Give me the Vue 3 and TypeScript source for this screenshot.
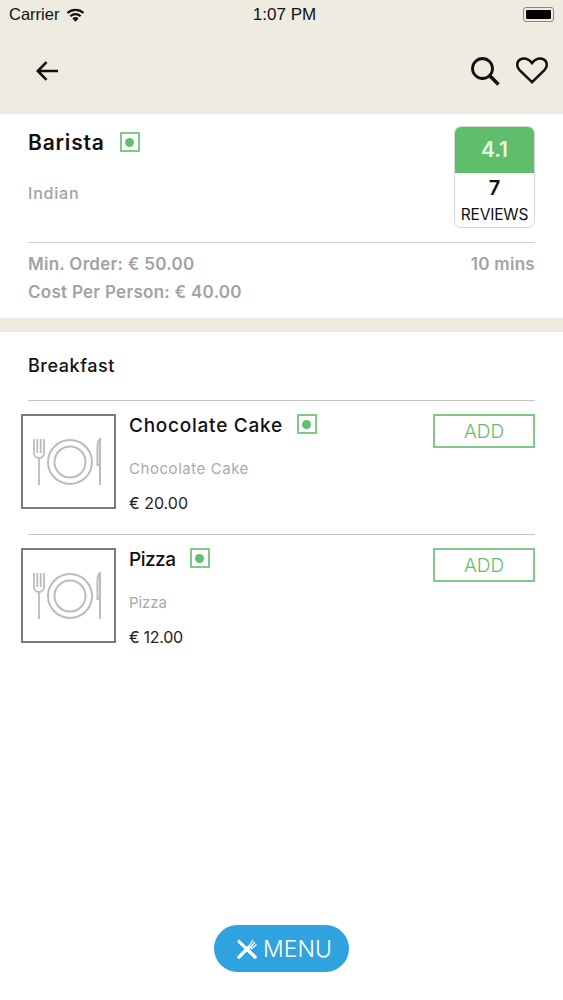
<script setup lang="ts">
interface Dish { name: string; price: string; short: boolean }
const dishes: Dish[] = [
  { name: 'Chocolate Cake', price: '€ 20.00', short: false },
  { name: 'Pizza', price: '€ 12.00', short: true },
]
</script>

<template>
  <div class="page">
    <header class="top">
      <div class="status">
        <div class="status-left">
          <span>Carrier</span>
          <svg width="19" height="14" viewBox="0 0 19 14">
            <path d="M9.500 13.800 6.400 10.400a4.400 4.400 0 0 1 6.200 0Z" fill="#111" />
            <path d="M4.400 8.200a7.400 7.400 0 0 1 10.200 0" fill="none" stroke="#111" stroke-width="2.200" />
            <path d="M1.500 5a11.700 11.700 0 0 1 16 0" fill="none" stroke="#111" stroke-width="2.200" />
          </svg>
        </div>
        <span class="clock">1:07 PM</span>
        <div class="battery"><div class="battery-fill"></div></div>
      </div>
      <nav class="nav">
        <svg class="back" width="24" height="20" viewBox="0 0 24 20">
          <path d="M22 10H2.500M10.500 1.200 1.800 10l8.700 8.800" fill="none" stroke="#111" stroke-width="2.600" />
        </svg>
        <div class="nav-right">
          <svg width="29" height="29" viewBox="0 0 29 29">
            <circle cx="11.500" cy="11.500" r="10" fill="none" stroke="#111" stroke-width="2.800" />
            <path d="M18.500 18.500 27.500 27.500" stroke="#111" stroke-width="3.600" fill="none" />
          </svg>
          <svg width="32" height="27" viewBox="0 0 32 27">
            <path d="M16 25.200 3.600 13.200C.2 9.500.6 4.800 4 2.600 7.600.4 12.600 1.200 16 6 19.400 1.200 24.400.4 28 2.600 31.400 4.800 31.800 9.500 28.400 13.200Z" fill="none" stroke="#111" stroke-width="2.500" />
          </svg>
        </div>
      </nav>
    </header>

    <section class="info">
      <div class="info-top">
        <div class="info-main">
          <div class="title-row">
            <h1 class="title">Barista</h1>
            <span class="veg"><i></i></span>
          </div>
          <p class="cuisine">Indian</p>
        </div>
        <div class="rating">
          <div class="rating-score">4.1</div>
          <div class="rating-count">7</div>
          <div class="rating-label">REVIEWS</div>
        </div>
      </div>
      <div class="info-meta">
        <div class="meta-row"><span>Min. Order: € 50.00</span><span>10 mins</span></div>
        <div class="meta-row"><span>Cost Per Person: € 40.00</span></div>
      </div>
    </section>

    <section class="menu-list">
      <h2 class="section-title">Breakfast</h2>
      <article v-for="dish in dishes" :key="dish.name" class="dish">
        <div class="thumb">
          <svg width="71" height="50" viewBox="0 0 71 50" fill="none" stroke="#bdbbbb">
            <path d="M1 2v14a5 5 0 0 0 10 0V2M4.300 2v14M7.700 2v14M6 21v27" stroke-width="1.800" />
            <circle cx="37" cy="25" r="22" stroke-width="2" />
            <circle cx="37" cy="25" r="15.500" stroke-width="2" />
            <path d="M67 48V28h-2.500V10c0-4 1-7 2.500-8v26" stroke-width="2" />
          </svg>
        </div>
        <div class="dish-body">
          <div class="dish-name-row">
            <h3 class="dish-name" :class="{ short: dish.short }">{{ dish.name }}</h3>
            <span class="veg"><i></i></span>
          </div>
          <p class="dish-desc" :class="{ short: dish.short }">{{ dish.name }}</p>
          <p class="dish-price" :class="{ short: dish.short }">{{ dish.price }}</p>
        </div>
        <button class="add" type="button">ADD</button>
      </article>
    </section>

    <button class="menu-btn" type="button">
      <svg width="20" height="20" viewBox="0 0 20 20" fill="#fff" stroke="#fff">
        <path d="M2 .5 19.300 16.700a1.700 1.700 0 0 1-2.500 2.500L1 3.800C.2 2.600.8 1 2 .5Z" stroke="none" />
        <path d="M1.900 18.100 11.800 8.200" stroke-width="3.400" stroke-linecap="round" />
        <path d="M11.500 8 16 1M12.800 9 18 3M13.800 10.300 19.500 5.500M11.800 8.200c1.500-.5 2-.3 2.800 1" stroke-width="1.300" fill="none" />
      </svg>
      <span>MENU</span>
    </button>
  </div>
</template>

<style>
html, body { margin: 0; background: #fff; }
</style>

<style scoped>
.page {
  position: relative;
  width: 563px;
  height: 1000px;
  overflow: hidden;
  background: #fff;
  font-family: Inter, "Liberation Sans", sans-serif;
  color: #111;
}
.top { height: 114px; background: #eeebe0; }
.status {
  height: 29px;
  padding: 0 9px;
  display: grid;
  grid-template-columns: 1fr auto 1fr;
  align-items: center;
  font-family: "Liberation Sans", sans-serif;
  font-size: 16.500px;
}
.status-left { display: flex; align-items: center; gap: 7px; }
.clock { font-size: 17px; margin-left: 6px; }
.battery {
  justify-self: end;
  width: 31px;
  height: 15px;
  box-sizing: border-box;
  border: 1px solid #888;
  border-radius: 3px;
  padding: 2px;
}
.battery-fill { height: 100%; background: #000; border-radius: 1px; }
.nav {
  display: flex;
  justify-content: space-between;
  align-items: flex-start;
  padding: 28px 15px 0 36px;
}
.back { margin-top: 4px; }
.nav-right { display: flex; align-items: flex-start; gap: 16px; }
.info { height: 192px; padding: 12px 28px 0; border-bottom: 14px solid #eeebe0; }
.info-top {
  display: flex;
  justify-content: space-between;
  align-items: flex-start;
  height: 116px;
  border-bottom: 1px solid #cfcfcf;
}
.title-row { display: flex; align-items: center; gap: 15px; height: 32px; }
.title { margin: 0; font-size: 21px; font-weight: 600; letter-spacing: .8px; }
.veg {
  width: 20px;
  height: 20px;
  box-sizing: border-box;
  border: 2px solid #80c988;
  display: flex;
  align-items: center;
  justify-content: center;
}
.veg i { width: 9px; height: 9px; border-radius: 50%; background: #62bd6c; display: block; }
.cuisine { margin: 25px 0 0; font-size: 16px; font-weight: 500; letter-spacing: .8px; color: #a2a2a6; }
.rating {
  width: 81px;
  height: 102px;
  box-sizing: border-box;
  border: 1px solid #d6d6d6;
  border-radius: 7px;
  overflow: hidden;
  text-align: center;
}
.rating-score {
  height: 47px;
  margin: -1px -1px 0;
  background: #5fbd6b;
  color: #e6f6e6;
  font-size: 21px;
  font-weight: 600;
  line-height: 47px;
}
.rating-count { font-size: 20px; font-weight: 600; line-height: 28px; margin-top: 1px; }
.rating-label { font-size: 15.500px; line-height: 26px; letter-spacing: -.2px; }
.info-meta { padding-top: 8px; font-size: 17px; font-weight: 600; letter-spacing: .28px; color: #a2a2a6; }
.meta-row { display: flex; justify-content: space-between; line-height: 27.500px; }
.menu-list { padding-top: 18px; }
.section-title { margin: 0 28px; height: 50px; font-size: 18px; font-weight: 500; letter-spacing: .55px; line-height: 32px; border-bottom: 1px solid #c4c4c4; }
.dish {
  margin-left: 21px;
  margin-right: 28px;
  padding-top: 13px;
  display: flex;
  align-items: flex-start;
  height: 120px;
}
.dish + .dish { border-top: 1px solid #c4c4c4; margin-left: 28px; }
.dish + .dish .thumb { margin-left: -7px; }
.thumb {
  width: 95px;
  height: 95px;
  box-sizing: border-box;
  border: 2px solid #7a7a7a;
  flex: none;
  display: flex;
  align-items: center;
  justify-content: center;
}
.dish-body { flex: 1; padding-left: 13px; }
.dish-name-row { display: flex; align-items: flex-start; gap: 14px; height: 24px; }
.dish-name { margin: 0; font-size: 19px; font-weight: 500; letter-spacing: .75px; line-height: 23px; }
.dish-name.short { letter-spacing: -.5px; }
.dish-desc { margin: 21px 0 0; font-size: 15px; letter-spacing: .55px; line-height: 20px; color: #a9a9ad; }
.dish-desc.short { letter-spacing: -.1px; }
.dish-price { margin: 14px 0 0; font-size: 16px; line-height: 20px; color: #222; }
.dish-price.short { letter-spacing: -.3px; }
.add {
  width: 102px;
  height: 34px;
  padding: 0;
  background: #fff;
  border: 2px solid #80c988;
  color: #62bd6c;
  font-family: inherit;
  font-size: 19px;
  font-weight: 300;
}
.menu-btn {
  position: absolute;
  left: 214px;
  top: 925px;
  width: 135px;
  height: 47px;
  border: 0;
  border-radius: 24px;
  background: #2fa3e0;
  color: #fff;
  display: flex;
  align-items: center;
  justify-content: center;
  gap: 6px;
  padding: 0 0 0 6px;
  font-family: inherit;
  font-size: 23px;
  font-weight: 300;
}
</style>
